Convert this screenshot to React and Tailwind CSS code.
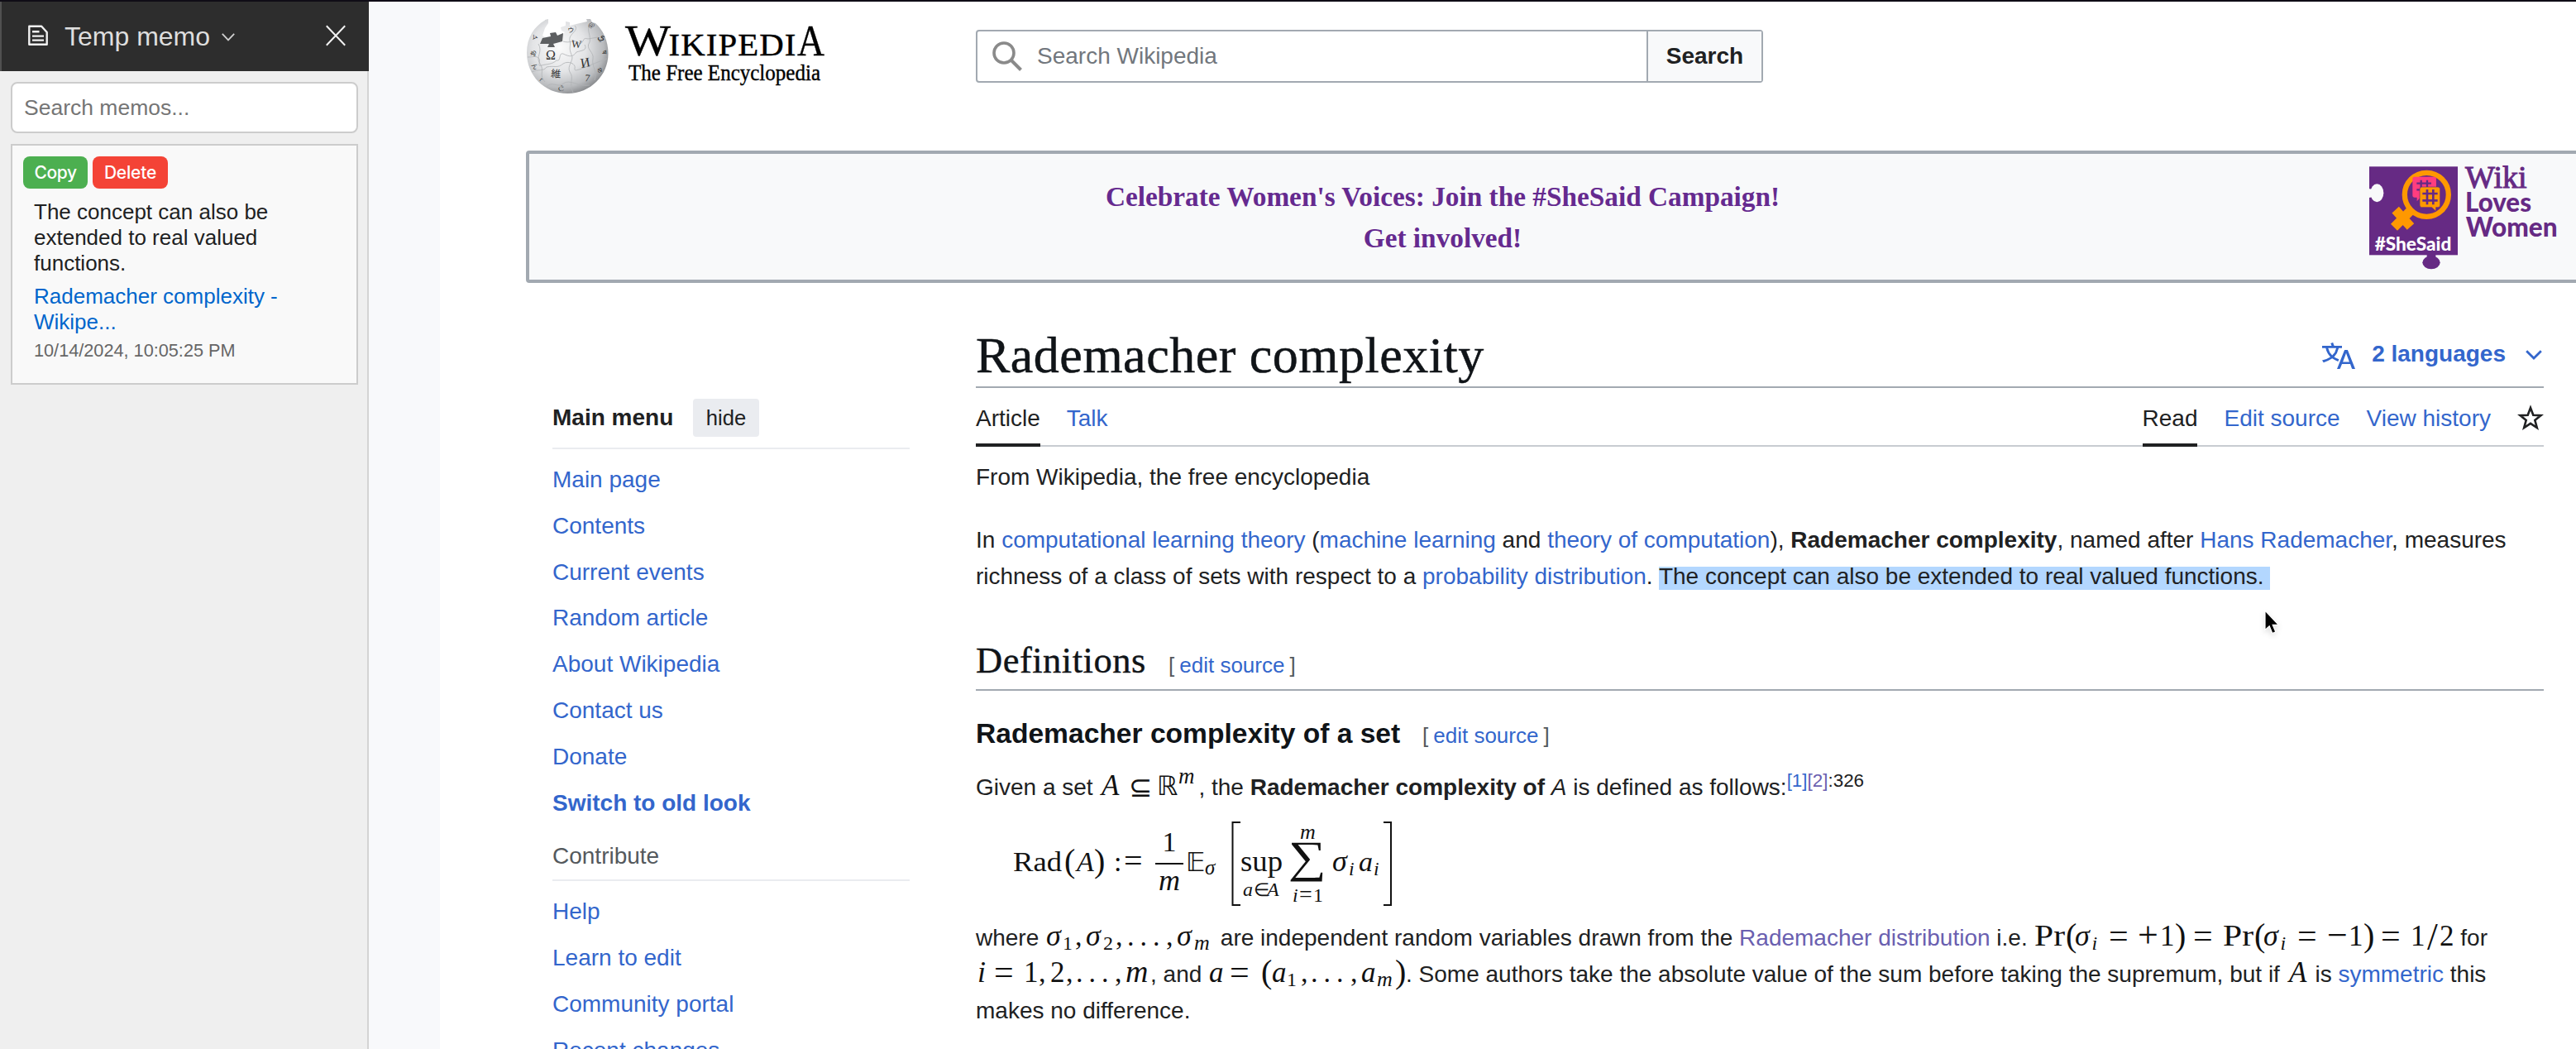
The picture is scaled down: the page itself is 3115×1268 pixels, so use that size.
import React from "react";

const SERIF = '"Liberation Serif", serif';
const SANS = '"Liberation Sans", sans-serif';

function Link({ children, visited }) {
  return <a className={visited ? "text-[#6a60b0]" : "text-[#3366cc]"}>{children}</a>;
}

/* ---------- mathematics ---------- */

// Each piece is [text, x, style, dy, size, width]; style: r = roman, i = italic, s = italic script, d = roman script, b = blackboard
function Piece({ p }) {
  const [t, x, k = "r", dy = 0, size, width] = p;
  const small = k === "s" || k === "d";
  return (
    <text
      x={x}
      y={dy}
      fontFamily={k === "b" ? '"DejaVu Sans", sans-serif' : SERIF}
      fontStyle={k === "i" || k === "s" ? "italic" : "normal"}
      fontSize={size || (small ? 24 : k === "b" ? 31 : 34)}
      textLength={width}
      lengthAdjust={width ? "spacingAndGlyphs" : undefined}
    >
      {t}
    </text>
  );
}

function Formula({ w, pieces }) {
  return (
    <svg width={w} height="22" viewBox={`0 -22 ${w} 22`} className="inline align-baseline overflow-visible" fill="#111">
      {pieces.map((p, n) => (
        <Piece key={n} p={p} />
      ))}
    </svg>
  );
}

function Display() {
  return (
    <svg width="480" height="110" viewBox="1220 -62.6 480 110" className="block overflow-visible ml-10" fill="#111">
      <Piece p={["Rad", 1225, "r", 0, 34, 59]} />
      <Piece p={["(", 1287, "r", 1, 40]} />
      <Piece p={["A", 1302, "i"]} />
      <Piece p={[")", 1323, "r", 1, 40]} />
      <Piece p={[":", 1347, "r"]} />
      <Piece p={["=", 1359, "r", 1, 40]} />
      <rect x="1397" y="-9.6" width="34" height="2" />
      <Piece p={["1", 1405.5, "r", -23.5]} />
      <Piece p={["m", 1401, "i", 23, 36]} />
      <Piece p={["𝔼", 1434, "b", 0, 32]} />
      <Piece p={["σ", 1457, "s", 4.5, 25]} />
      <path d="M1500 -58.5H1490.5V41.5H1500M1673 -58.5H1682V41.5H1673" fill="none" stroke="#111" strokeWidth="2" />
      <Piece p={["sup", 1500, "r", 0, 35, 51]} />
      <Piece p={["a", 1503, "s", 30]} />
      <Piece p={["∈", 1515.5, "d", 30, 22]} />
      <Piece p={["A", 1532, "s", 30]} />
      <Piece p={["∑", 1558, "r", 1.5, 54, 46]} />
      <Piece p={["m", 1572, "s", -38.6, 26]} />
      <Piece p={["i", 1563, "s", 37]} />
      <Piece p={["=", 1571, "d", 37.5, 28]} />
      <Piece p={["1", 1588, "d", 37]} />
      <Piece p={["σ", 1611, "i", 0, 36]} />
      <Piece p={["i", 1631, "s", 5]} />
      <Piece p={["a", 1643, "i"]} />
      <Piece p={["i", 1661, "s", 5]} />
    </svg>
  );
}

const SIGMAS = [
  ["σ", 1, "i", 0, 36], ["1", 21, "d", 5], [",", 36], ["σ", 49, "i", 0, 36], ["2", 70, "d", 5], [",", 85],
  [".", 99], [".", 114.5], [".", 130], [",", 146], ["σ", 159, "i", 0, 36], ["m", 180, "s", 5, 26],
];
const PROB = [
  ["Pr", 0, "r", 0, 35, 37], ["(", 38, "r", 1, 40], ["σ", 49, "i", 0, 36], ["i", 69.5, "s", 5], ["=", 90, "r", 2, 42],
  ["+", 125, "r", 2, 44], ["1", 152, "r", 0, 35], [")", 170, "r", 1, 40], ["=", 192, "r", 2, 42],
  ["Pr", 228, "r", 0, 35, 37], ["(", 266, "r", 1, 40], ["σ", 277, "i", 0, 36], ["i", 297.5, "s", 5], ["=", 318, "r", 2, 42],
  ["−", 354, "r", 2, 44], ["1", 380, "r", 0, 35], [")", 398, "r", 1, 40], ["=", 419, "r", 2, 42],
  ["1", 455, "r", 0, 35], ["/", 475, "r", 5, 46], ["2", 490, "r", 0, 35],
];
const INDEX = [
  ["i", 2, "i", 0, 36], ["=", 22, "r", 2, 42], ["1", 58, "r", 0, 35], [",", 76], ["2", 90, "r", 0, 35], [",", 109],
  [".", 121], [".", 136.5], [".", 152], [",", 168], ["m", 181, "i", 0, 38],
];
const VECTOR = [
  ["a", 1, "i", 0, 35], ["=", 26, "r", 2, 42], ["(", 64, "r", 1, 40], ["a", 77, "i", 0, 35], ["1", 95, "d", 5], [",", 112],
  [".", 124], [".", 139.5], [".", 155], [",", 172], ["a", 185, "i", 0, 35], ["m", 204, "s", 5, 26], [")", 226, "r", 1, 40],
];

/* ---------- memo side panel ---------- */

function Sidebar() {
  return (
    <aside className="w-[446px] shrink-0 bg-[#efefef] flex flex-col">
      <div className="h-[84px] bg-[#2d2d2d] border-l-2 border-[#505050] flex items-center pl-8 pr-7 pb-[3px] text-[#dedede]">
        <svg width="24" height="26" viewBox="0 0 24 26" fill="none" stroke="#f0f0f0" strokeWidth="2.4" strokeLinejoin="round">
          <path d="M1.3 1.8H16.2L22.7 9V23.8H1.3Z" />
          <path d="M5 8.3H13.5M5 13.6H19M5 18.6H19" />
        </svg>
        <span className="ml-[20px] mt-0.5 text-[32px] leading-9">Temp memo</span>
        <svg width="16" height="10" viewBox="0 0 16 10" fill="none" stroke="#cfcfcf" strokeWidth="1.8" className="ml-[14px] mt-1">
          <path d="M.8 .8L8 8.4L15.2 .8" />
        </svg>
        <svg width="24" height="26" viewBox="0 0 24 26" fill="none" stroke="#f2f2f2" strokeWidth="2" className="ml-auto">
          <path d="M.8 1.3L23.2 24.7M23.2 1.3L.8 24.7" />
        </svg>
      </div>
      <div className="flex-1 border-r-2 border-[#d4d4d4] pl-[13px] pr-[11px] pt-[13px]">
        <div className="h-[62px] rounded-lg border-2 border-[#ccc] bg-white pl-3.5 pt-0.5 flex items-center text-[26.5px] text-[#757575]">
          Search memos...
        </div>
        <div className="mt-[13px] h-[291px] border-2 border-[#ccc] bg-[#f9f9f9] px-[13px] pt-[13px] text-[#202122]">
          <div className="flex gap-1.5 text-white font-medium text-[21px] leading-[40px]" style={{ fontFamily: "Inter, sans-serif" }}>
            <span className="w-[78px] h-[39px] rounded-lg bg-[#4caf50] text-center tracking-[-0.4px]">Copy</span>
            <span className="w-[91px] h-[39px] rounded-lg bg-[#f44336] text-center tracking-[-0.2px]">Delete</span>
          </div>
          <div className="pl-[13px] pt-[13px] text-[26px] leading-[31px]">
            The concept can also be
            <br />
            extended to real valued
            <br />
            functions.
            <div className="mt-[9px] text-[#0066cc]">
              Rademacher complexity -
              <br />
              Wikipe...
            </div>
            <div className="mt-[3px] text-[21.7px] text-[#666]">10/14/2024, 10:05:25 PM</div>
          </div>
        </div>
      </div>
    </aside>
  );
}

/* ---------- logos ---------- */

function Globe() {
  const letters = [
    ["Ω", 23, 49, 16, 0], ["W", 53.5, 34, 13, 6], ["И", 66, 59, 16, -10], ["維", 29, 70, 12, 4], ["ウ", 49, 16, 8, 5],
    ["ي", 85, 24, 12, 10], ["7", 70, 75, 12, 6], ["උ", 38, 84, 9, 12], ["ム", 7, 25, 7, -20], ["あ", 10, 46, 8, -80],
    ["ん", 5, 56, 8, 50], ["ष", 91, 38, 8, 85], ["Ф", 89, 66, 8, -60], ["@", 74, 8, 8, 25], ["r", 15, 74, 8, 40],
  ];
  return (
    <svg width="99" height="90" viewBox="0 0 99 90" className="shrink-0 ml-[0.5px]">
      <defs>
        <radialGradient id="ball" cx=".4" cy=".38" r=".66">
          <stop offset="0" stopColor="#fbfbfb" />
          <stop offset=".5" stopColor="#e3e4e6" />
          <stop offset=".82" stopColor="#b9bbbe" />
          <stop offset="1" stopColor="#85878a" />
        </radialGradient>
      </defs>
      <path
        d="M22 1.500C9 9 0 22 0 41C0 68 21 90 49.500 90C77 90 98.500 68 98.500 42C98.500 26 92 13 83 5L79 4L77 0L72 0L73 3L60 6L52 8L52 4L47 3L47 8L41 10L42 14L46 16L44 18L22 22L19 20L22 11L26 5L26 0L22 1Z"
        fill="url(#ball)"
      />
      <path d="M16 30L19 23L29 21L28 17L35 16L37 20L44 17L43 27L32 30L34 34L25 34L27 30Z" fill="#5d5f61" />
      <g fill="none" stroke="#b0b2b5" strokeWidth=".8">
        <path d="M44 27C52 30 58 24 63 29C70 31 66 21 74 24L86 22" />
        <path d="M1 46C8 46 12 44 15 48C17 53 12 58 18 56C26 54 30 55 36 50C42 52 38 40 44 42C52 46 56 46 60 40C66 38 74 38 70 31" />
        <path d="M6 64C14 60 20 64 24 58C34 56 37 60 44 54C50 50 60 54 58 60C56 66 74 56 97 48" />
        <path d="M24 82C30 74 38 84 44 78C52 72 62 82 76 80" />
        <path d="M58 8C64 14 50 18 52 26C54 32 50 34 54 43C58 50 48 56 52 64C58 72 50 76 56 89" />
        <path d="M76 6C72 14 78 20 76 28C70 36 82 40 80 48C78 58 86 62 82 74" />
        <path d="M14 30C20 40 10 46 16 54C22 62 14 68 22 76" />
      </g>
      <g fill="#333" fontFamily={'"Liberation Serif", "Noto Sans CJK JP", "DejaVu Sans", serif'}>
        {letters.map(([c, x, y, s, r]) => (
          <text key={c} x={x} y={y} fontSize={s} transform={`rotate(${r} ${x} ${y})`}>
            {c}
          </text>
        ))}
      </g>
    </svg>
  );
}

function Wordmark() {
  return (
    <svg width="250" height="92" viewBox="0 0 250 92" className="ml-5 overflow-visible" fontFamily={SERIF} fill="#000">
      <g stroke="#000" strokeWidth=".4">
        <text x="0" y="43.500" fontSize="53" textLength="55" lengthAdjust="spacingAndGlyphs">W</text>
        <text x="52.500" y="43.500" fontSize="37" textLength="155" lengthAdjust="spacingAndGlyphs" letterSpacing="1">IKIPEDI</text>
        <text x="208" y="43.500" fontSize="53" textLength="33" lengthAdjust="spacingAndGlyphs">A</text>
        <text x="4" y="73.500" fontSize="27" textLength="232" lengthAdjust="spacingAndGlyphs">The Free Encyclopedia</text>
      </g>
    </svg>
  );
}

function SheSaid() {
  return (
    <svg width="240" height="134" viewBox="255 110 720 402" className="ml-4 mt-[11px] shrink-0 overflow-visible">
      <rect x="255" y="123" width="321" height="321" fill="#662a84" />
      <ellipse cx="283" cy="219" rx="24" ry="33" fill="#f8f9fa" />
      <path d="M253 203L268 206V234L253 236Z" fill="#f8f9fa" />
      <ellipse cx="480" cy="471" rx="32" ry="24" fill="#662a84" />
      <rect x="464" y="440" width="32" height="20" fill="#662a84" />
      <circle cx="463" cy="225" r="79.500" fill="none" stroke="#ff9800" strokeWidth="19" />
      <path d="M412 276L345 343M350 280L405 341" stroke="#ff9800" strokeWidth="34" />
      <path d="M420 160H490Q498 160 498 168V235H440L428 249V235H420Q412 235 412 227V168Q412 160 420 160Z" fill="#ff3d7f" />
      <path d="M443 172V215M465 172V215M427 184H480M427 207H480" stroke="#662a84" strokeWidth="7" />
      <path d="M446 197H504Q512 197 512 205V263Q512 271 504 271H497V285L482 271H446Q438 271 438 263V205Q438 197 446 197Z" fill="#ff9800" stroke="#662a84" strokeWidth="2" />
      <path d="M465 206V261M487 206V261M448 221H503M448 246H503" stroke="#662a84" strokeWidth="8" />
      <g fontFamily="Lato, sans-serif" fontWeight="900">
        <text x="275" y="427" fontSize="70" fill="#fff" textLength="278" lengthAdjust="spacingAndGlyphs">#SheSaid</text>
        <g fill="#662a84">
          <text x="603" y="288" fontSize="98" textLength="240" lengthAdjust="spacingAndGlyphs">Loves</text>
          <text x="605" y="377" fontSize="98" textLength="333" lengthAdjust="spacingAndGlyphs">Women</text>
        </g>
      </g>
      <text x="603" y="200" fontFamily={SERIF} fontSize="116" fill="#662a84" stroke="#662a84" strokeWidth="3" textLength="224" lengthAdjust="spacingAndGlyphs">Wiki</text>
    </svg>
  );
}

/* ---------- page parts ---------- */

function Header() {
  return (
    <header className="h-[180px] flex items-start pl-[104px]">
      <div className="w-[544px] flex pt-[21px]">
        <Globe />
        <Wordmark />
      </div>
      <div className="mt-[34px] w-[952px] h-16 flex border-2 border-[#a2a9b1] rounded bg-white">
        <div className="flex-1 flex items-center pl-[18px] pb-px text-[#72777d]">
          <svg width="36" height="36" viewBox="0 0 36 36" fill="none" stroke="#8a8a8a" strokeWidth="3.6">
            <circle cx="14" cy="14" r="12" />
            <path d="M22.500 22.500L34.500 34.500" strokeWidth="4" />
          </svg>
          <span className="ml-[18px]">Search Wikipedia</span>
        </div>
        <div className="w-[139px] border-l-2 border-[#a2a9b1] bg-[#f8f9fa] flex items-center justify-center pb-px font-bold">Search</div>
      </div>
    </header>
  );
}

function Banner() {
  return (
    <section className="ml-[104px] w-[2600px] h-[160px] border-4 border-[#a2a9b1] rounded bg-[#f8f9fa] flex">
      <div
        className="w-[2209px] shrink-0 pt-[27px] text-center font-bold text-[33.3px] leading-[49.7px] text-[#652a8f]"
        style={{ fontFamily: SERIF }}
      >
        Celebrate Women's Voices: Join the #SheSaid Campaign!
        <br />
        Get involved!
      </div>
      <SheSaid />
    </section>
  );
}

const MAIN = ["Main page", "Contents", "Current events", "Random article", "About Wikipedia", "Contact us", "Donate"];
const CONTRIBUTE = ["Help", "Learn to edit", "Community portal", "Recent changes"];

function Menu() {
  return (
    <nav className="w-[432px] ml-[136px] pt-[140px] text-[#3366cc] leading-[55.8px]">
      <div className="h-[61px] flex items-start border-b-2 border-[#eaecf0] text-[#202122] leading-[46px]">
        <span className="font-bold w-[170px]">Main menu</span>
        <span className="w-20 h-[46px] rounded bg-[#eaecf0] text-center text-[25.6px]">hide</span>
      </div>
      <ul className="mt-[9px]">
        {MAIN.map((t) => (
          <li key={t}>{t}</li>
        ))}
        <li className="font-bold">Switch to old look</li>
      </ul>
      <div className="h-[67px] pt-[19px] leading-9 border-b-2 border-[#eaecf0] text-[#54595d]">Contribute</div>
      <ul className="mt-[9px]">
        {CONTRIBUTE.map((t) => (
          <li key={t}>{t}</li>
        ))}
      </ul>
    </nav>
  );
}

function Tab({ children, active }) {
  return (
    <span className={active ? "h-[71px] pt-1.5 leading-[61px] border-b-4 border-[#202122]" : "h-[71px] pt-1.5 leading-[61px] text-[#3366cc]"}>
      {children}
    </span>
  );
}

function EditSource() {
  return (
    <span className="text-[26px] text-[#54595d]">
      [<span className="mx-[6px] text-[#3366cc]">edit source</span>]
    </span>
  );
}

function Article() {
  return (
    <article className="w-[1896px] ml-20 pt-[51px] shrink-0 whitespace-nowrap">
      <div className="h-[76px] flex border-b-2 border-[#a2a9b1]">
        <h1
          className="text-[62px] leading-[73px] tracking-[0.5px] text-[#101418] [-webkit-text-stroke:0.5px_#101418]"
          style={{ fontFamily: SERIF }}
        >
          Rademacher complexity
        </h1>
        <div className="ml-auto flex items-center pb-[4px] text-[#3366cc]">
          <svg width="40" height="40" viewBox="0 0 20 20" fill="#3366cc" className="mt-1">
            <path d="M20 18h-1.440a.61.61 0 0 1-.4-.12.81.81 0 0 1-.230-.31L17 15h-5l-1 2.540a.77.77 0 0 1-.220.3.590.59 0 0 1-.4.140H9l4.550-11.470h1.890zm-3.530-4.310L14.890 9.500a11.600 11.600 0 0 1-.390-1.240q-.090.370-.190.690l-.190.560-1.580 4.190zm-6.300-1.580a13.400 13.400 0 0 1-2.910-1.410 11.460 11.460 0 0 0 2.810-5.370H12V4H7.310a4 4 0 0 0-.2-.560C6.870 2.790 6.600 2 6.600 2l-1.470.5s.4.890.6 1.500H0v1.330h2.150A11.230 11.230 0 0 0 5 10.700a17.200 17.200 0 0 1-5 2.100q.56.820.87 1.380a23.300 23.300 0 0 0 5.220-2.510 15.600 15.600 0 0 0 3.560 1.770zM3.630 5.330h4.910a8.100 8.100 0 0 1-2.450 4.450 9.100 9.100 0 0 1-2.460-4.450" />
          </svg>
          <span className="ml-5 font-bold">2 languages</span>
          <svg width="20" height="12" viewBox="0 0 20 12" fill="none" stroke="#3366cc" strokeWidth="2.800" className="ml-[24px] mr-0.5 mt-0.5">
            <path d="M1.200 1.200L10 10L18.800 1.200" />
          </svg>
        </div>
      </div>
      <div className="h-[71px] flex shadow-[inset_0_-2px_0_#c8ccd1]">
        <Tab active>Article</Tab>
        <span className="w-8" />
        <Tab>Talk</Tab>
        <div className="ml-auto flex gap-8">
          <Tab active>Read</Tab>
          <Tab>Edit source</Tab>
          <Tab>View history</Tab>
          <svg width="32" height="32" viewBox="0 0 32 32" fill="none" stroke="#202122" strokeWidth="2.600" className="mt-5">
            <path d="M16 4L19.300 12.700L28.600 13.100L21.300 18.900L23.800 28L16 22.800L8.200 28L10.700 18.900L3.400 13.100L12.700 12.700Z" />
          </svg>
        </div>
      </div>
      <p className="mt-[15px] leading-[44px]">From Wikipedia, the free encyclopedia</p>
      <p className="mt-8 leading-[44.1px]">
        In <Link>computational learning theory</Link> (<Link>machine learning</Link> and <Link>theory of computation</Link>),{" "}
        <b>Rademacher complexity</b>, named after <Link>Hans Rademacher</Link>, measures
        <br />
        richness of a class of sets with respect to a <Link>probability distribution</Link>.{" "}
        <span className="pb-[1px] pr-[7px] bg-[linear-gradient(transparent_4px,#b3d7ff_4px)]">
          The concept can also be extended to real valued functions.
        </span>
      </p>
      <div className="mt-[51px] h-[65px] flex items-baseline leading-[57px] border-b-2 border-[#a2a9b1]">
        <h2
          className="w-[233px] text-[44.5px] tracking-[0.500px] text-[#101418] [-webkit-text-stroke:0.4px_#101418]"
          style={{ fontFamily: SERIF }}
        >
          Definitions
        </h2>
        <EditSource />
      </div>
      <div className="mt-[30px] h-[44px] flex items-baseline leading-[44px]">
        <h3 className="w-[540px] text-[33.6px] font-bold text-[#101418]">Rademacher complexity of a set</h3>
        <EditSource />
      </div>
      <p className="mt-[21px] h-[44px] leading-[44px]">
        Given a set{" "}
        <Formula w={120} pieces={[["A", 3, "i", 0, 35], ["⊆", 36, "r", 2, 34], ["ℝ", 70, "b", 0, 32], ["m", 96, "s", -14, 27]]} />, the{" "}
        <b>Rademacher complexity of</b> <i>A</i> is defined as follows:
        <span className="relative -top-2.5 text-[22.4px]">
          <Link>[1]</Link>
          <Link visited>[2]</Link>:326
        </span>
      </p>
      <div className="mt-4">
        <Display />
      </div>
      <p className="mt-[12px] leading-[44.1px]">
        where <Formula w={204} pieces={SIGMAS} /> are independent random variables drawn from the{" "}
        <Link visited>Rademacher distribution</Link> i.e. <Formula w={508} pieces={PROB} /> for
        <br />
        <Formula w={211} pieces={INDEX} />, and <Formula w={239} pieces={VECTOR} />. Some authors take the absolute value of the sum before
        taking the supremum, but if <Formula w={27} pieces={[["A", 3, "i", 0, 35]]} /> is <Link>symmetric</Link> this
        <br />
        makes no difference.
      </p>
    </article>
  );
}

export default function App() {
  return (
    <div
      className="relative w-[3115px] h-[1268px] overflow-hidden bg-white border-t-2 border-[#0f0c16] flex text-[28px] text-[#202122]"
      style={{ fontFamily: SANS }}
    >
      <Sidebar />
      <div className="w-[86px] shrink-0 bg-[#f8f9fb]" />
      <main className="w-[2583px] shrink-0 overflow-hidden">
        <Header />
        <Banner />
        <div className="flex">
          <Menu />
          <Article />
        </div>
      </main>
      <svg width="20" height="32" viewBox="0 0 20 32" className="absolute left-[2737px] top-[734px] drop-shadow-md">
        <path d="M2 2V25.500L7.200 20.800L10.800 29.500L14.800 27.800L11.200 19.400H18.300Z" fill="#000" stroke="#fff" strokeWidth="1.200" />
      </svg>
    </div>
  );
}
